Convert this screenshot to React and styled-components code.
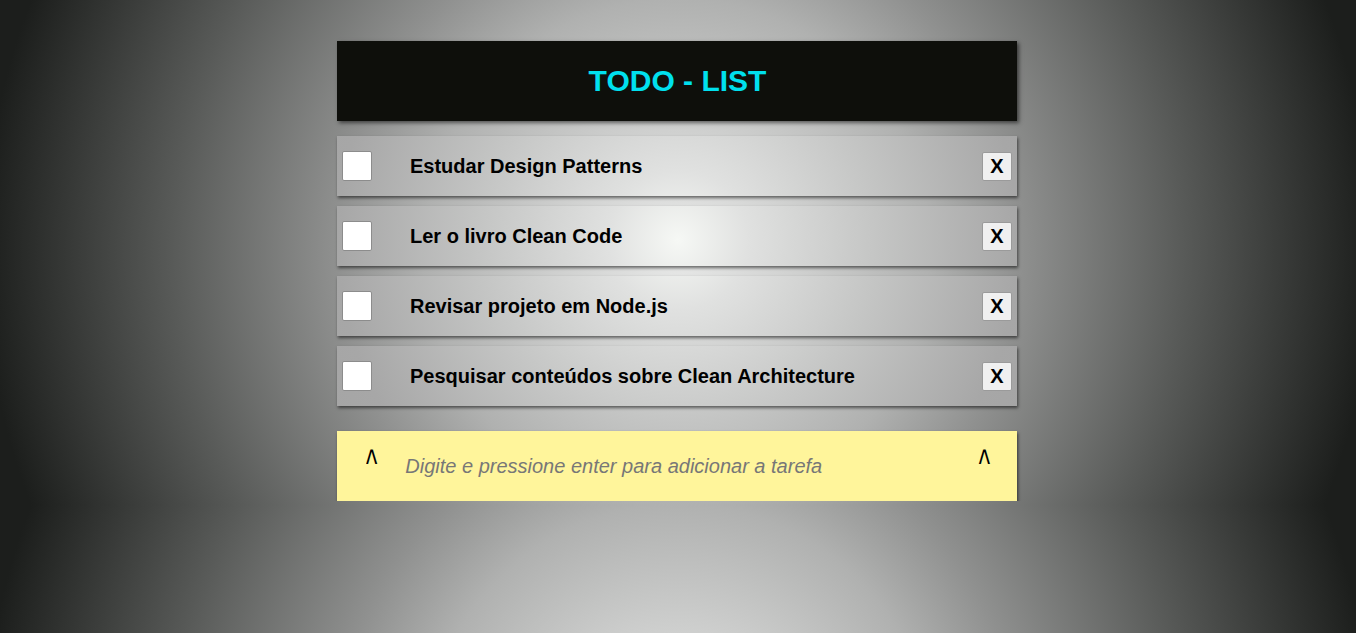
import React from "react";
import styled, { createGlobalStyle } from "styled-components";

const GlobalStyle = createGlobalStyle`
  html {
    min-height: 100%;
    background: radial-gradient(
      circle farthest-corner at 50% 50%,
      #e8e9e8 0%,
      #cfd0cf 17%,
      #b0b1b0 35%,
      #909190 47%,
      #585a58 70%,
      #1c1e1c 96%
    );
    background-size: 100% 505px;
    background-repeat: repeat;
  }

  body {
    margin: 0;
    font-family: "Liberation Sans", Arial, sans-serif;
  }
`;

const Page = styled.div`
  width: 680px;
  margin: 0 auto;
  padding: 41px 2px 0 0;
  display: flex;
  flex-direction: column;
`;

const Header = styled.header`
  height: 80px;
  display: flex;
  align-items: center;
  justify-content: center;
  padding-left: 1px;
  background-color: #0e0f0b;
  box-shadow: 2px 2px 4px rgba(0, 0, 0, 0.55);
`;

const Title = styled.h1`
  margin: 0;
  font-size: 30px;
  font-weight: 700;
  color: #00e0ee;
`;

const List = styled.ul`
  list-style: none;
  margin: 15px 0 0 0;
  padding: 0;
  display: flex;
  flex-direction: column;
  gap: 10px;
`;

const Item = styled.li`
  height: 60px;
  display: flex;
  align-items: center;
  padding: 0 5px;
  box-sizing: border-box;
  background: radial-gradient(
      circle 720px at 678px 240px,
      #f6f8f5 0%,
      #e0e1e0 70px,
      #c6c7c6 190px,
      #a7a7a7 340px,
      #969696 720px
    )
    fixed;
  box-shadow: 1px 2px 3px rgba(0, 0, 0, 0.55);
`;

const Check = styled.span`
  width: 30px;
  height: 30px;
  box-sizing: border-box;
  flex-shrink: 0;
  background: #ffffff;
  border: 1px solid #8c8c8c;
  border-radius: 2px;
`;

const Label = styled.span`
  flex: 1;
  margin-left: 38px;
  font-size: 20px;
  font-weight: 700;
  color: #000;
`;

const RemoveButton = styled.button`
  width: 30px;
  height: 29px;
  padding: 0;
  display: flex;
  align-items: center;
  justify-content: center;
  background: #f0f0f0;
  border: 1px solid #9a9a9a;
  border-radius: 2px;
  font-family: "Liberation Sans", Arial, sans-serif;
  font-size: 20px;
  font-weight: 700;
  color: #000;
`;

const NewTask = styled.div`
  margin-top: 25px;
  height: 70px;
  display: flex;
  align-items: flex-start;
  padding: 12px 27px 0 29px;
  box-sizing: border-box;
  background: #fff59b;
  box-shadow: 1px 2px 3px rgba(0, 0, 0, 0.6);
`;

const Caret = styled.span`
  display: inline-block;
  font-size: 24px;
  line-height: 24px;
  color: #000;
  transform: scaleY(1.7);
  transform-origin: top;
`;

const Placeholder = styled.span`
  flex: 1;
  margin: 12px 0 0 28px;
  font-size: 20px;
  line-height: 23px;
  font-style: italic;
  color: #777777;
`;

const tasks = [
  "Estudar Design Patterns",
  "Ler o livro Clean Code",
  "Revisar projeto em Node.js",
  "Pesquisar conteúdos sobre Clean Architecture",
];

export default function App() {
  return (
    <>
      <GlobalStyle />
      <Page>
        <Header>
          <Title>TODO - LIST</Title>
        </Header>
        <List>
          {tasks.map((task) => (
            <Item key={task}>
              <Check />
              <Label>{task}</Label>
              <RemoveButton>X</RemoveButton>
            </Item>
          ))}
        </List>
        <NewTask>
          <Caret>^</Caret>
          <Placeholder>Digite e pressione enter para adicionar a tarefa</Placeholder>
          <Caret>^</Caret>
        </NewTask>
      </Page>
    </>
  );
}
